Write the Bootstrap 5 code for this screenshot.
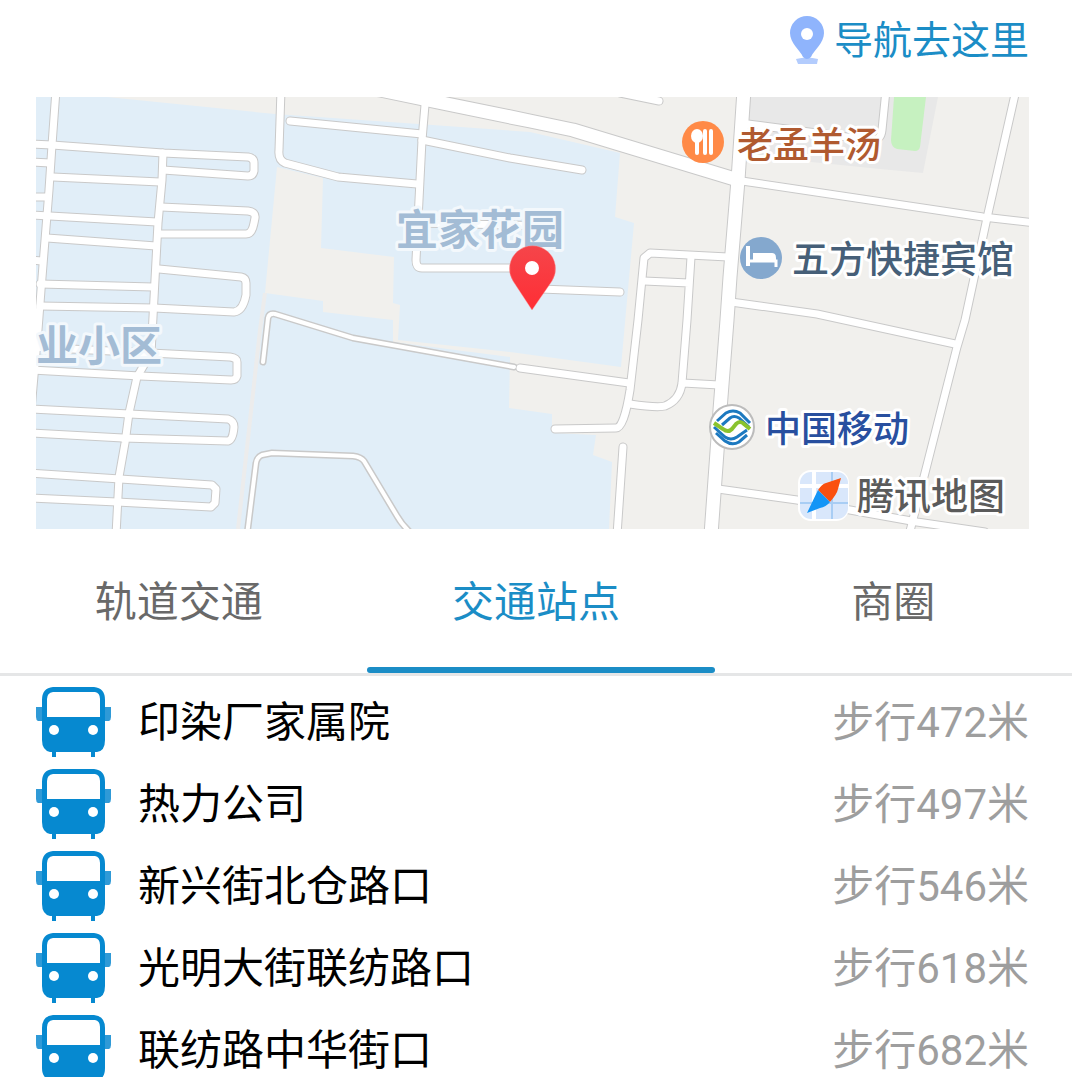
<!DOCTYPE html>
<html lang="zh-CN">
<head>
<meta charset="utf-8">
<meta name="viewport" content="width=device-width, initial-scale=1">
<title>位置与周边</title>
<link href="https://cdn.jsdelivr.net/npm/bootstrap@5.3.0/dist/css/bootstrap.min.css" rel="stylesheet">
<style>
  body { font-family: Roboto, "Noto Sans CJK SC", sans-serif; color: #000; background: #fff; }
  .gutter { padding-left: 36px; padding-right: 43px; }
  .nav-bar-top { height: 97px; padding-bottom: 17px; }
  .go-link { color: #1b8dc6; font-size: 39px; line-height: 48px; gap: 10px; }
  .go-link svg { width: 34px; height: 48px; }
  .go-link span { padding-top: 2px; }
  .area-map svg { width: 100%; height: auto; }
  .road-edge, .road-face { fill: none; stroke-linejoin: round; stroke-linecap: round; }
  .road-edge { stroke: #c9c9c9; --main: 15px; --mid: 9px; --thin: 7px; }
  .road-face { stroke: #fff; --main: 13px; --mid: 7px; --thin: 4px; }
  .w-main { stroke-width: var(--main); }
  .w-mid { stroke-width: var(--mid); }
  .w-thin { stroke-width: var(--thin); }
  .place { font-family: "Noto Sans CJK SC", sans-serif; font-weight: 500; paint-order: stroke; stroke: #fff; stroke-width: 6px; stroke-linejoin: round; font-size: 36px; }
  .place-wide { font-size: 37px; }
  .zone { font-size: 42px; font-weight: 700; fill: #a3bcd5; stroke: #f3f8fc; }
  .tab-strip { border-bottom: 3px solid #e5e6e7; }
  .tab-item { background: none; border: 0; padding: 42px 0 0; color: #696969; font-size: 42px; line-height: 64px; height: 144px; }
  .tab-item.active { color: #1b8dc6; }
  .tab-line { height: 6px; margin-left: 10px; border-radius: 3px; }
  .active .tab-line { background: #1b8dc6; }
  .stop-list { padding-top: 11px; font-size: 42px; }
  .stop-row { height: 82px; line-height: 72px; }
  .stop-row svg { width: 75px; height: 70px; margin-right: 27px; }
  .walk { color: #9e9e9e; }
</style>
<script src="https://cdn.jsdelivr.net/npm/bootstrap@5.3.0/dist/js/bootstrap.bundle.min.js"></script>
</head>
<body>
<svg width="0" height="0" class="position-absolute" aria-hidden="true">
  <defs>
    <symbol id="bus" viewBox="0 0 75 70">
      <path fill="#2f9ad7" d="M0 20h6v14H2q-2-1-2-4zM75 20h-6v14h4q2-1 2-4z"/>
      <path fill="#0689d0" d="M17 0H58Q69 1 69 13V53Q69 64 61 65H59V70H55V65H20V70H16V65H14Q6 63 6 53V13Q6 1 17 0Z"/>
      <path fill="#fff" d="M17 5H59Q64 6 64 12V30H11V12Q11 6 17 5Z"/>
      <circle cx="18" cy="43" r="5" fill="#fff"/><circle cx="57" cy="43" r="5" fill="#fff"/>
    </symbol>
    <g id="road-net">
      <g class="w-thin">
        <path d="M263 362L268 318Q269 313 275 314L353 338L514 367"/>
        <path d="M247 535L256 463Q257 457 262 455L272 453L353 456Q361 457 364 461L397 516Q402 525 412 534"/>
      </g>
      <g class="w-mid">
        <path d="M56 90L52 145L49 190L45 240L41 290L38 330L31 410"/>
        <path d="M30 144L52 145L163 153L248 157Q254 158 254 163V171Q253 176 248 176L163 170"/>
        <path d="M30 162L50 163M30 197L47 197M30 260L42 261M53 177L160 182"/>
        <path d="M163 153L162 180L158 223L153 317L151 353L137 377L129 413L125 443L119 477L116 535"/>
        <path d="M30 215L50 216L157 222M47 238L156 246M40 284L153 287M40 306L154 308"/>
        <path d="M161 207L248 211Q256 212 255 218L254 223Q252 234 246 234L160 234"/>
        <path d="M159 269L241 277Q246 278 246 283V295Q243 311 234 312L154 308"/>
        <path d="M30 347L230 357Q237 358 237 362V376Q236 380 231 380L140 376L30 370"/>
        <path d="M30 409L228 419Q234 421 234 427Q233 440 228 441L123 438L30 433"/>
        <path d="M30 473L212 485L216 489L215 503L211 507L117 502L30 498"/>
        <path d="M281 90L279 150Q278 160 285 163L338 177L417 184"/>
        <path d="M290 121L422 134M422 140L510 158L582 170"/>
        <path d="M425 105L422 140L416 260Q416 268 422 268H535"/>
        <path d="M419 223L550 226M540 289L620 292M620 93L659 101"/>
        <path d="M742 181L983 217L1035 223"/>
        <path d="M740 123L870 140Q881 141 882 130L886 90"/>
        <path d="M1016 90L987 218L965 320L957 347L927 465L909 535"/>
        <path d="M731 302L817 314L955 344M718 489L797 500L850 510L917 522L985 532"/>
        <path d="M728 257L650 253L644 258L638 320L630 390Q624 428 616 428L555 429"/>
        <path d="M644 281L689 283M691 257L687 320L682 383Q680 400 665 406Q657 408 630 404M683 383L719 385"/>
        <path d="M520 368L629 383M623 447L617 535"/>
      </g>
      <g class="w-main">
        <path d="M380 90L447 104L530 121L573 130L738 180"/>
        <path d="M744 90L738 180L730 277L727 320L720 410L711 535"/>
      </g>
    </g>
    <linearGradient id="redPin" x2="0" y2="1"><stop stop-color="#f5454a"/><stop offset="1" stop-color="#ff2e35"/></linearGradient>
  </defs>
</svg>

<main class="vh-100 d-flex flex-column overflow-hidden">
  <header class="nav-bar-top gutter d-flex justify-content-end align-items-center flex-shrink-0">
    <a href="#map" class="go-link d-flex align-items-center text-decoration-none">
      <svg viewBox="0 0 34 48" aria-hidden="true">
        <path fill="#b3ccfd" d="M6 43Q17 40 28 43L27 48H8Z"/>
        <path fill="#8fb4fc" d="M17 0A17 17 0 0 1 34 17C34 27 24 34 21 41Q17 45 13 41C10 34 0 27 0 17A17 17 0 0 1 17 0Z"/>
        <circle cx="17" cy="18" r="6" fill="#fff"/>
      </svg>
      <span>导航去这里</span>
    </a>
  </header>

  <section id="map" class="area-map gutter flex-shrink-0">
    <svg viewBox="36 97 993 432" class="d-block" role="img" aria-label="地图">
      <rect x="36" y="97" width="993" height="432" fill="#f1f0ed"/>
      <path fill="#e1eef8" d="M36 97H107L275 114L390 122L530 132L620 153L615 217L634 223L621 367L510 352L398 340L400 305L393 303L394 257L321 248L323 178L277 167L265 293L323 301V312L393 320V342L510 357L509 408L552 414V433L596 435L593 455L612 462L609 529H36Z"/>
      <path d="M265 293L260 330L238 529" fill="none" stroke="#ececec" stroke-width="4"/>
      <path fill="#e8e8e8" d="M748 97H938L923 173L880 169L742 155Z"/>
      <path fill="#c6f1c0" d="M894 97H926L920 147Q919 151 915 151L897 149Q891 147 891 140Z"/>
      <use href="#road-net" class="road-edge"/>
      <use href="#road-net" class="road-face"/>

      <text class="place zone" x="396" y="245">宜家花园</text>
      <text class="place zone" x="36" y="361">业小区</text>
      <text class="place" x="737" y="158" fill="#b05a30">老孟羊汤</text>
      <text class="place place-wide" x="792" y="273" fill="#465f78">五方快捷宾馆</text>
      <text class="place" x="765" y="442" fill="#284f9f">中国移动</text>
      <text class="place place-wide" x="857" y="510" fill="#5b5b5b">腾讯地图</text>

      <!-- restaurant -->
      <circle cx="703" cy="142" r="21" fill="#ff8a47"/>
      <ellipse cx="697" cy="136" rx="6" ry="7" fill="#fff"/>
      <path d="M697 140V153M705 131V153M711 131V153" stroke="#fff" stroke-width="4" stroke-linecap="round"/>
      <!-- hotel -->
      <circle cx="761" cy="258" r="21" fill="#84a8ce"/>
      <path d="M748 246V266" stroke="#fff" stroke-width="4"/>
      <path d="M748 261H776V267" fill="none" stroke="#fff" stroke-width="3"/>
      <path d="M753 253H772Q776 253 776 258V262H753Z" fill="#fff"/>
      <!-- mobile carrier -->
      <circle cx="732" cy="427" r="22" fill="#fff" stroke="#bcbcbc" stroke-width="2"/>
      <g fill="none" stroke-width="3" stroke="#1c79c0">
        <path d="M717 421L726 413Q733 409 740 413L750 423"/>
        <path d="M722 425L730 418Q734 415 739 418L749 427"/>
        <path d="M714 427L725 437Q731 441 737 437L747 430"/>
        <path d="M716 433L725 441Q732 446 739 442L747 435"/>
        <path stroke="#8ac32e" stroke-width="4" d="M714 423L723 429Q728 433 732 429L736 424Q740 420 744 424L750 429"/>
      </g>
      <!-- map brand -->
      <rect x="798" y="470" width="51" height="51" rx="13" fill="#fff"/>
      <rect x="800" y="472" width="48" height="47" rx="11" fill="#d9e7fb"/>
      <path d="M814 472V519M800 486H848" stroke="#fff" stroke-width="4"/>
      <path d="M832 472V519M800 503H848" stroke="#a8cdf4" stroke-width="2"/>
      <path d="M841 478L826 483Q822 484 818 490L830 502Q837 494 838 489Z" fill="#fa5010"/>
      <path d="M807 513L818 490L830 502Q826 507 820 508Z" fill="#1495f6"/>
      <!-- selected place -->
      <path d="M532 310L513 281A23 23 0 1 1 552 281Z" fill="url(#redPin)" stroke="#ff9999" stroke-opacity=".4"/>
      <circle cx="532" cy="268" r="7" fill="#fff"/>
    </svg>
  </section>

  <nav class="tab-strip flex-shrink-0">
    <div class="row g-0" role="tablist">
      <button type="button" class="tab-item col-4 d-flex flex-column justify-content-between" role="tab" aria-selected="false"><span class="w-100 text-center">轨道交通</span></button>
      <button type="button" class="tab-item active col-4 d-flex flex-column justify-content-between" role="tab" aria-selected="true"><span class="w-100 text-center">交通站点</span><span class="tab-line align-self-stretch"></span></button>
      <button type="button" class="tab-item col-4 d-flex flex-column justify-content-between" role="tab" aria-selected="false"><span class="w-100 text-center">商圈</span></button>
    </div>
  </nav>

  <ul class="stop-list gutter list-unstyled mb-0">
    <li class="stop-row d-flex align-items-start"><svg aria-hidden="true"><use href="#bus"/></svg><span class="me-auto">印染厂家属院</span><span class="walk">步行472米</span></li>
    <li class="stop-row d-flex align-items-start"><svg aria-hidden="true"><use href="#bus"/></svg><span class="me-auto">热力公司</span><span class="walk">步行497米</span></li>
    <li class="stop-row d-flex align-items-start"><svg aria-hidden="true"><use href="#bus"/></svg><span class="me-auto">新兴街北仓路口</span><span class="walk">步行546米</span></li>
    <li class="stop-row d-flex align-items-start"><svg aria-hidden="true"><use href="#bus"/></svg><span class="me-auto">光明大街联纺路口</span><span class="walk">步行618米</span></li>
    <li class="stop-row d-flex align-items-start"><svg aria-hidden="true"><use href="#bus"/></svg><span class="me-auto">联纺路中华街口</span><span class="walk">步行682米</span></li>
  </ul>
</main>
</body>
</html>
